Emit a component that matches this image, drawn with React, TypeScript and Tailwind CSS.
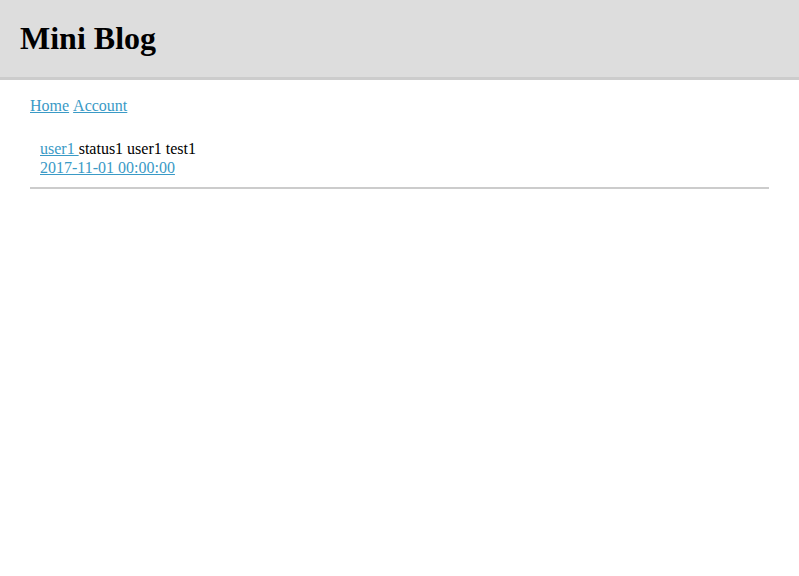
export default function App() {
  return (
    <div className="min-h-screen bg-white text-black font-['Liberation_Serif',serif]">
      <header className="h-[80px] border-b-[3px] border-[#cccccc] bg-[#dddddd] px-5 pt-[19px]">
        <h1 className="text-[32px] leading-[38px] font-bold">Mini Blog</h1>
      </header>

      <div className="px-[30px] pt-[16px]">
        <nav className="flex gap-1 text-base leading-[20px] text-[#3a9ac6]">
          <a href="#" className="underline">Home</a>
          <a href="#" className="underline">Account</a>
        </nav>

        <article className="mt-[23px] border-b-2 border-[#cccccc] px-[10px] pb-[10px] text-base leading-[19px]">
          <div>
            <a href="#" className="text-[#3a9ac6] underline">user1 </a>
            status1 user1 test1
          </div>
          <a href="#" className="text-[#3a9ac6] underline">2017-11-01 00:00:00</a>
        </article>
      </div>
    </div>
  );
}
